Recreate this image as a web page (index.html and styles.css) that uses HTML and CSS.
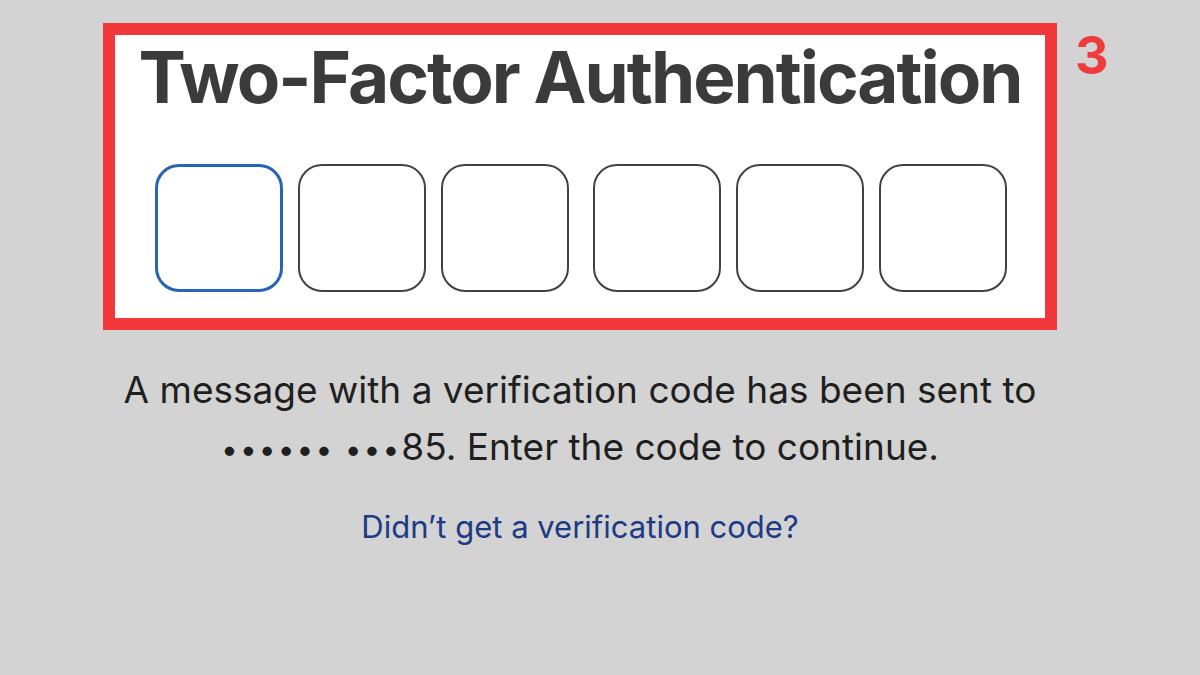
FILE: index.html
```html
<!DOCTYPE html>
<html lang="en">
<head>
<meta charset="utf-8">
<title>Two-Factor Authentication</title>
<link rel="stylesheet" href="styles.css">
</head>
<body>
<main class="page">
  <section class="frame">
    <h1 class="title">Two-Factor Authentication</h1>
    <div class="code">
      <div class="group">
        <div class="digit active"></div>
        <div class="digit"></div>
        <div class="digit"></div>
      </div>
      <div class="group">
        <div class="digit"></div>
        <div class="digit"></div>
        <div class="digit"></div>
      </div>
    </div>
    <span class="step">3</span>
  </section>
  <p class="message">A message with a verification code has been sent to<br><span class="dots">•••••• •••</span>85. Enter the code to continue.</p>
  <a class="resend" href="#">Didn’t get a verification code?</a>
</main>
</body>
</html>
```
FILE: styles.css
```css
html, body {
  margin: 0;
  padding: 0;
}
body {
  width: 1200px;
  height: 675px;
  overflow: hidden;
  background: #d3d3d3;
  font-family: Inter, "Noto Sans", sans-serif;
}
.page {
  box-sizing: border-box;
  width: 954px;
  margin-left: 103px;
  padding-top: 23px;
  display: flex;
  flex-direction: column;
  align-items: center;
}
.frame {
  position: relative;
  box-sizing: border-box;
  width: 954px;
  height: 307px;
  border: 12px solid #f2383a;
  background: #ffffff;
  padding: 6px 0 0 40px;
  display: flex;
  flex-direction: column;
}
.title {
  margin: 0;
  font-size: 71px;
  line-height: 72px;
  font-weight: 700;
  color: #3b3b3b;
  letter-spacing: -2px;
  text-align: center;
  margin-left: -40px;
}
.code {
  margin-top: 51px;
  display: flex;
  gap: 24px;
}
.group {
  display: flex;
  gap: 15px;
}
.digit {
  box-sizing: border-box;
  width: 128px;
  height: 128px;
  border: 2px solid #464141;
  border-radius: 24px;
  background: #fff;
}
.digit.active {
  border: 3.5px solid #2764b6;
}
.step {
  position: absolute;
  left: calc(100% + 30px);
  top: -5px;
  font-size: 52px;
  line-height: 52px;
  font-weight: 700;
  color: #f03a3b;
}
.message {
  margin: 31px 0 0;
  font-size: 37px;
  line-height: 57px;
  color: #1f1f1f;
  text-align: center;
  white-space: nowrap;
}
.dots {
  font-size: 30px;
  letter-spacing: 2px;
}
.resend {
  margin-top: 32px;
  font-size: 31px;
  line-height: 34px;
  color: #1d3a85;
  text-decoration: none;
}
```
